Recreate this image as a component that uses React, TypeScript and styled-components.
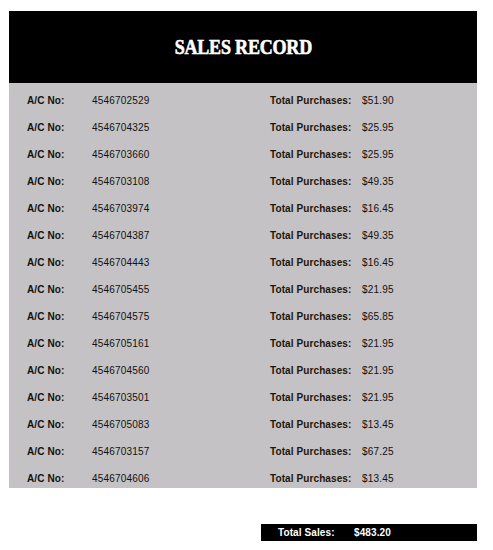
import React from 'react'
import styled, { createGlobalStyle } from 'styled-components'

const GlobalStyle = createGlobalStyle`
    body {
        margin: 0;
        background: #fff;
        font-family: "Liberation Sans", Arial, sans-serif;
    }
`

const Page = styled.div`
    width: 468px;
    padding: 11px 0 0 9px;
    display: flex;
    flex-direction: column;
`

const Header = styled.div`
    height: 72px;
    background: #000;
    display: flex;
    align-items: center;
    justify-content: center;
`

const Title = styled.h1`
    margin: 0;
    color: #fff;
    font-family: "Liberation Serif", "Times New Roman", serif;
    font-weight: 900;
    font-size: 20px;
    letter-spacing: -0.2px;
    line-height: 1;
    -webkit-text-stroke: 0.6px #fff;
    transform: scaleX(0.9);
`

const RecordList = styled.div`
    background: #c4c2c5;
    display: flex;
    flex-direction: column;
`

const Row = styled.div`
    height: 27px;
    box-sizing: border-box;
    padding: 12px 0 0 18px;
    display: grid;
    grid-template-columns: 65px 178px 92px 1fr;
    font-size: 10px;
    line-height: 12px;
    letter-spacing: 0.2px;
    color: #111;
`

const Label = styled.span<{ $tone?: string }>`
    font-weight: bold;
    letter-spacing: 0.1px;
    color: ${(p) => p.$tone || '#111'};
`

const Value = styled.span`
    color: #111;
`

const TotalBar = styled.div`
    margin-top: 36px;
    align-self: flex-end;
    width: 216px;
    height: 17px;
    background: #000;
    display: grid;
    grid-template-columns: 76px 1fr;
    align-items: center;
    padding-left: 17px;
    box-sizing: border-box;
    color: #fff;
    font-size: 10px;
    font-weight: bold;
    letter-spacing: 0.1px;
`

const records = [
    { ac: '4546702529', total: '$51.90' },
    { ac: '4546704325', total: '$25.95' },
    { ac: '4546703660', total: '$25.95' },
    { ac: '4546703108', total: '$49.35' },
    { ac: '4546703974', total: '$16.45' },
    { ac: '4546704387', total: '$49.35' },
    { ac: '4546704443', total: '$16.45' },
    { ac: '4546705455', total: '$21.95' },
    { ac: '4546704575', total: '$65.85' },
    { ac: '4546705161', total: '$21.95' },
    { ac: '4546704560', total: '$21.95' },
    { ac: '4546703501', total: '$21.95' },
    { ac: '4546705083', total: '$13.45' },
    { ac: '4546703157', total: '$67.25' },
    { ac: '4546704606', total: '$13.45' },
]

const App: React.FC = () => {
    return (
        <>
            <GlobalStyle />
            <Page>
                <Header>
                    <Title>SALES RECORD</Title>
                </Header>
                <RecordList>
                    {records.map((r) => (
                        <Row key={r.ac}>
                            <Label>A/C No:</Label>
                            <Value>{r.ac}</Value>
                            <Label $tone='#1e1608'>Total Purchases:</Label>
                            <Value>{r.total}</Value>
                        </Row>
                    ))}
                </RecordList>
                <TotalBar>
                    <span>Total Sales:</span>
                    <span>$483.20</span>
                </TotalBar>
            </Page>
        </>
    )
}

export default App
